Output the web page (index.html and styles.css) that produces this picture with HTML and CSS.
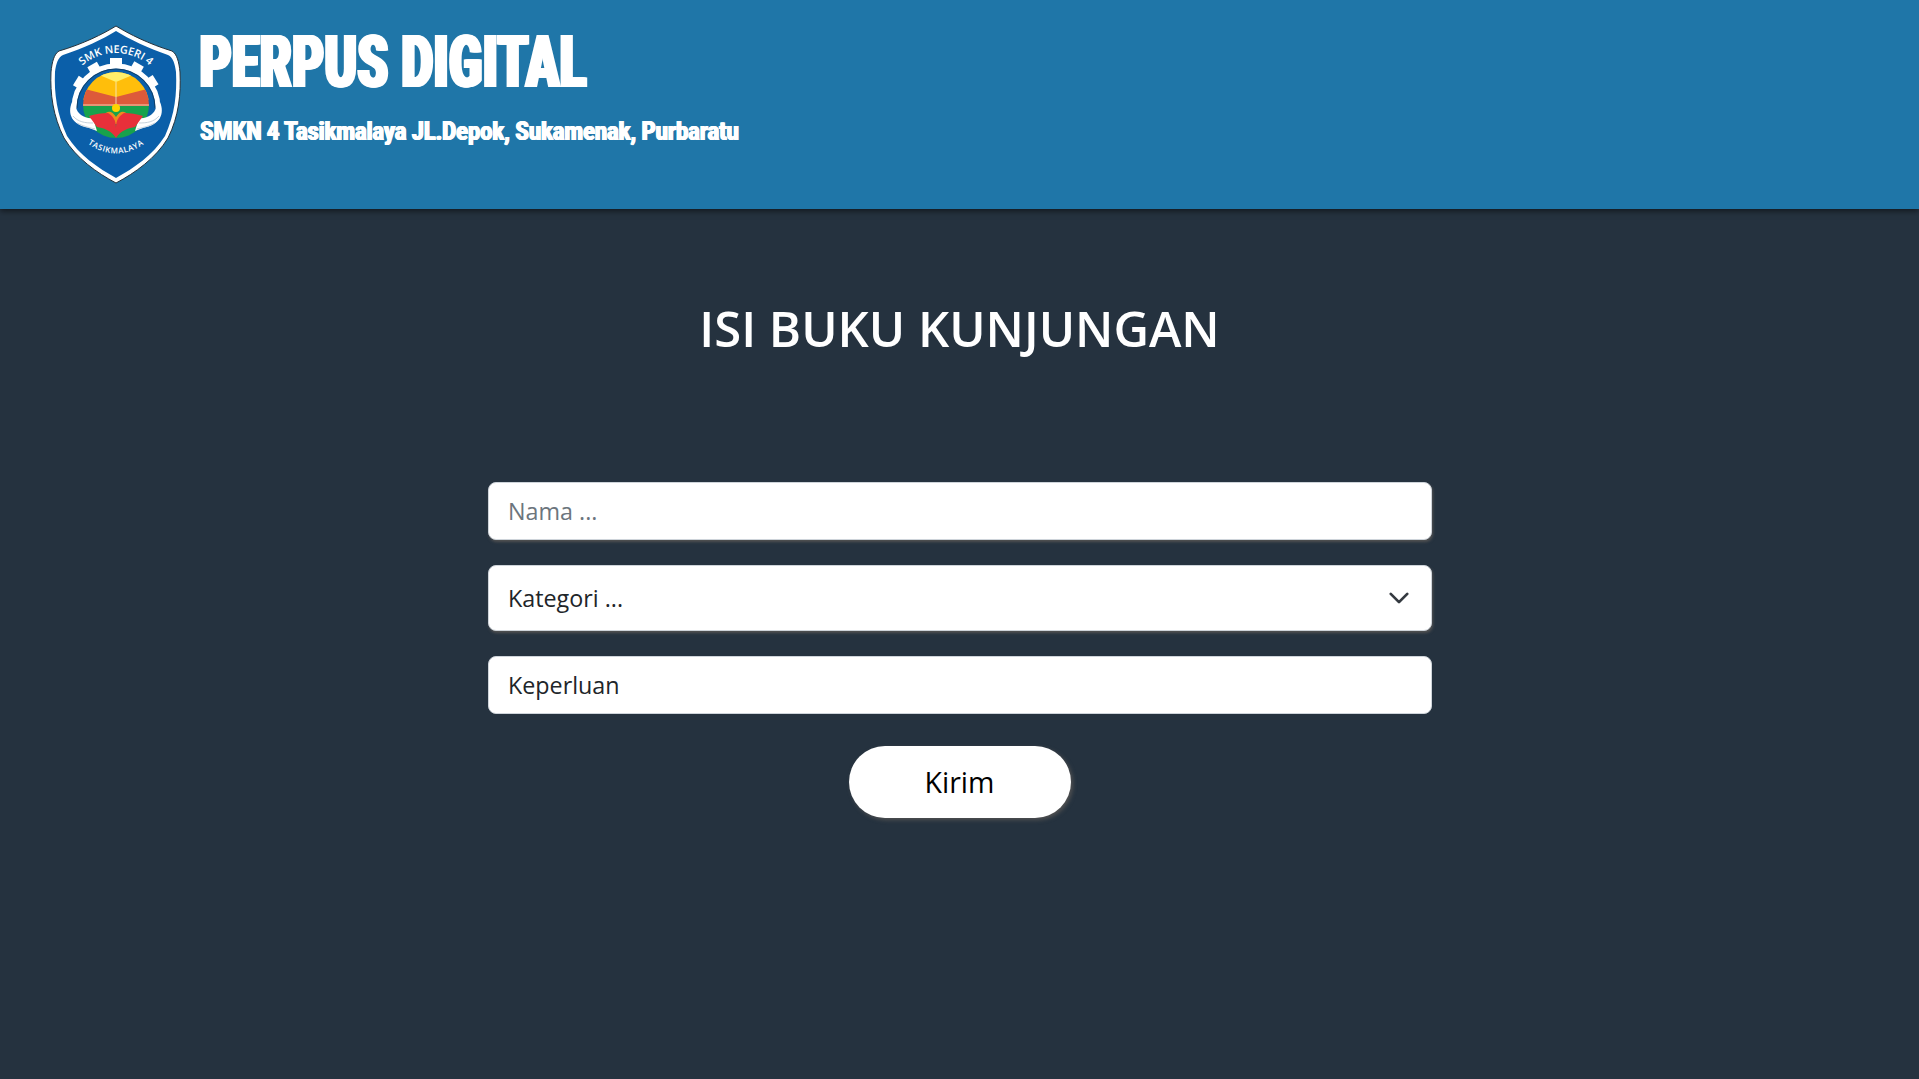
FILE: index.html
```html
<!DOCTYPE html>
<html lang="id">
<head>
<meta charset="utf-8">
<title>Perpus Digital</title>
<link rel="stylesheet" href="styles.css">
</head>
<body>
<header class="site-header">
  <svg class="logo" viewBox="18 14 134 162" aria-label="Logo SMK Negeri 4 Tasikmalaya">
    <defs>
      <clipPath id="disc"><circle cx="85" cy="95" r="33"/></clipPath>
      <path id="arcTop" d="M40 70 A51 51 0 0 1 130 70"/>
      <path id="arcBottom" d="M53 131 Q85 156 117 131"/>
    </defs>
    <path class="shield-edge" d="M85 16 C98 24 118 34 141 41 C146 44 148 52 149 62 C150 84 148 106 137 128 C125 148 104 163 85 173 C66 163 45 148 33 128 C22 106 19 84 20 62 C21 52 23 44 28 41 C52 34 72 24 85 16 Z"/>
    <path class="shield-fill" d="M85 21 C98 29 117 38 137 45 C142 47 144 54 145 62 C146 84 144 104 134 126 C122 145 103 158 85 168 C67 158 48 145 36 126 C26 104 23 84 24 62 C25 54 27 47 32 45 C53 38 72 29 85 21 Z"/>
    <g class="gear">
      <path class="gear-ring" d="M43 98 A42 42 0 0 1 127 98"/>
      <path class="gear-line" d="M46 98 A39 39 0 0 1 124 98"/>
      <rect x="79" y="48" width="12" height="6"/>
      <rect x="79" y="48" width="11" height="6" transform="rotate(-30 85 95)"/>
      <rect x="79" y="48" width="11" height="6" transform="rotate(30 85 95)"/>
      <rect x="79" y="48" width="11" height="6" transform="rotate(-58 85 95)"/>
      <rect x="79" y="48" width="11" height="6" transform="rotate(58 85 95)"/>
    </g>
    <g clip-path="url(#disc)">
      <rect x="50" y="60" width="70" height="30" fill="#ffbe0b"/>
      <path fill="#ffef6a" d="M66 60 H104 V64 L85 72 L66 64 Z"/>
      <path fill="#dd5a3a" d="M50 78 L85 87 L120 78 V96 H50 Z"/>
      <rect x="50" y="96" width="70" height="34" fill="#18a24c"/>
      <path class="disc-line" d="M85 72 V95 M50 95 H120"/>
    </g>
    <path class="wing" d="M41 92 C36 104 41 115 58 118 L66 121 L62 108 C54 109 46 104 45 97 Z"/>
    <path class="wing" d="M129 92 C134 104 129 115 112 118 L104 121 L108 108 C116 109 124 104 125 97 Z"/>
    <path class="wing-line" d="M42 106 C47 112 54 113 62 113 M46 113 C52 116 56 117 64 119"/>
    <path class="wing-line" d="M128 106 C123 112 116 113 108 113 M124 113 C118 116 114 117 106 119"/>
    <circle cx="85" cy="98" r="4" fill="#ffd400"/>
    <path fill="#ef8a1f" d="M73 105 C77 100 81 101 85 107 C89 101 93 100 97 105 L90 114 H80 Z"/>
    <path fill="#e8303a" d="M58 106 C64 104 71 103 77 103 C82 106 85 110 85 118 C85 110 88 106 93 103 C99 103 106 104 112 106 L104 117 C98 118 90 120 85 128 C80 120 72 118 66 117 Z"/>
    <text class="logo-text top"><textPath href="#arcTop" startOffset="50%" text-anchor="middle">SMK NEGERI 4</textPath></text>
    <text class="logo-text bottom"><textPath href="#arcBottom" startOffset="50%" text-anchor="middle">TASIKMALAYA</textPath></text>
  </svg>
  <div class="brand">
    <div class="brand-title">PERPUS DIGITAL</div>
    <div class="brand-sub">SMKN 4 Tasikmalaya JL.Depok, Sukamenak, Purbaratu</div>
  </div>
</header>
<main class="content">
  <h1 class="page-title">ISI BUKU KUNJUNGAN</h1>
  <form class="visit-form">
    <input class="field field-raised" type="text" placeholder="Nama ...">
    <div class="select-wrap">
      <select class="field field-raised field-select">
        <option>Kategori ...</option>
      </select>
      <svg class="chevron" viewBox="0 0 16 16"><path d="M2 5l6 6 6-6"/></svg>
    </div>
    <input class="field" type="text" value="Keperluan">
    <button class="submit" type="button">Kirim</button>
  </form>
</main>
</body>
</html>
```

FILE: styles.css
```css
* { box-sizing: border-box; }
html, body { height: 100%; }
body {
  margin: 0;
  background: #25323f;
  font-family: "Open Sans", "Noto Sans", sans-serif;
  overflow: hidden;
}
.site-header {
  height: 209px;
  background: #1f76a8;
  display: flex;
  align-items: flex-start;
  padding: 25px 0 0 49px;
  gap: 17px;
  box-shadow: 0 2px 6px rgba(0, 0, 0, .55);
}
.logo { width: 134px; height: 162px; flex: none; margin-top: -1px; }
.shield-edge { fill: #fff; stroke: #26323c; stroke-width: 1; }
.shield-fill { fill: #0b5fa9; }
.gear rect { fill: #fff; }
.gear-ring { fill: none; stroke: #fff; stroke-width: 5; }
.gear-line { fill: none; stroke: #13304a; stroke-width: .7; }
.disc-line { fill: none; stroke: #f6ecd0; stroke-width: .8; }
.wing { fill: #fff; }
.wing-line { fill: none; stroke: #b9c6d2; stroke-width: .8; }
.logo-text { fill: #fff; font-family: "Open Sans", sans-serif; }
.logo-text.top { font-size: 10.8px; font-weight: 600; }
.logo-text.bottom { font-size: 8px; font-weight: 600; letter-spacing: .6px; }
.brand {
  color: #fff;
  font-family: Roboto, "Liberation Sans", sans-serif;
  font-weight: 900;
}
.brand-title {
  font-size: 72px;
  line-height: 76px;
  letter-spacing: 1.5px;
  white-space: nowrap;
  transform: scaleX(.667);
  transform-origin: left center;
  text-shadow: 1.5px 0 #fff, -1.5px 0 #fff, 3px 0 #fff, -3px 0 #fff;
}
.brand-sub {
  font-size: 26px;
  line-height: 30px;
  margin-top: 15px;
  white-space: nowrap;
  transform: scaleX(.832);
  transform-origin: left center;
  text-shadow: .7px 0 #fff, -.7px 0 #fff;
}
.content { display: flex; flex-direction: column; align-items: center; }
.page-title {
  margin: 89px 0 0;
  color: #fff;
  font-size: 49px;
  line-height: 60px;
  font-weight: 600;
}
.visit-form {
  width: 944px;
  margin-top: 124px;
  display: flex;
  flex-direction: column;
  align-items: center;
}
.field {
  display: block;
  width: 100%;
  height: 58px;
  padding: 0 19.5px;
  border: 1px solid #ced4da;
  border-radius: 8px;
  background: #fff;
  color: #212529;
  font: 400 23.3px "Open Sans", "Noto Sans", sans-serif;
  outline: none;
}
.field::placeholder { color: #6c757d; opacity: 1; }
.field-raised { box-shadow: 1px 2px 3px #525252; }
.select-wrap { position: relative; width: 100%; margin: 25px 0; }
.field-select { height: 66px; appearance: none; }
.chevron {
  position: absolute;
  right: 22px;
  top: 22px;
  width: 22px;
  height: 22px;
  fill: none;
  stroke: #343a40;
  stroke-width: 2;
  stroke-linecap: round;
  stroke-linejoin: round;
}
.submit {
  width: 222px;
  height: 72px;
  margin-top: 32px;
  border: 0;
  border-radius: 36px;
  background: #fff;
  color: #000;
  font: 400 28.5px "Open Sans", "Noto Sans", sans-serif;
  box-shadow: 2px 2px 4px #525252;
}
```
